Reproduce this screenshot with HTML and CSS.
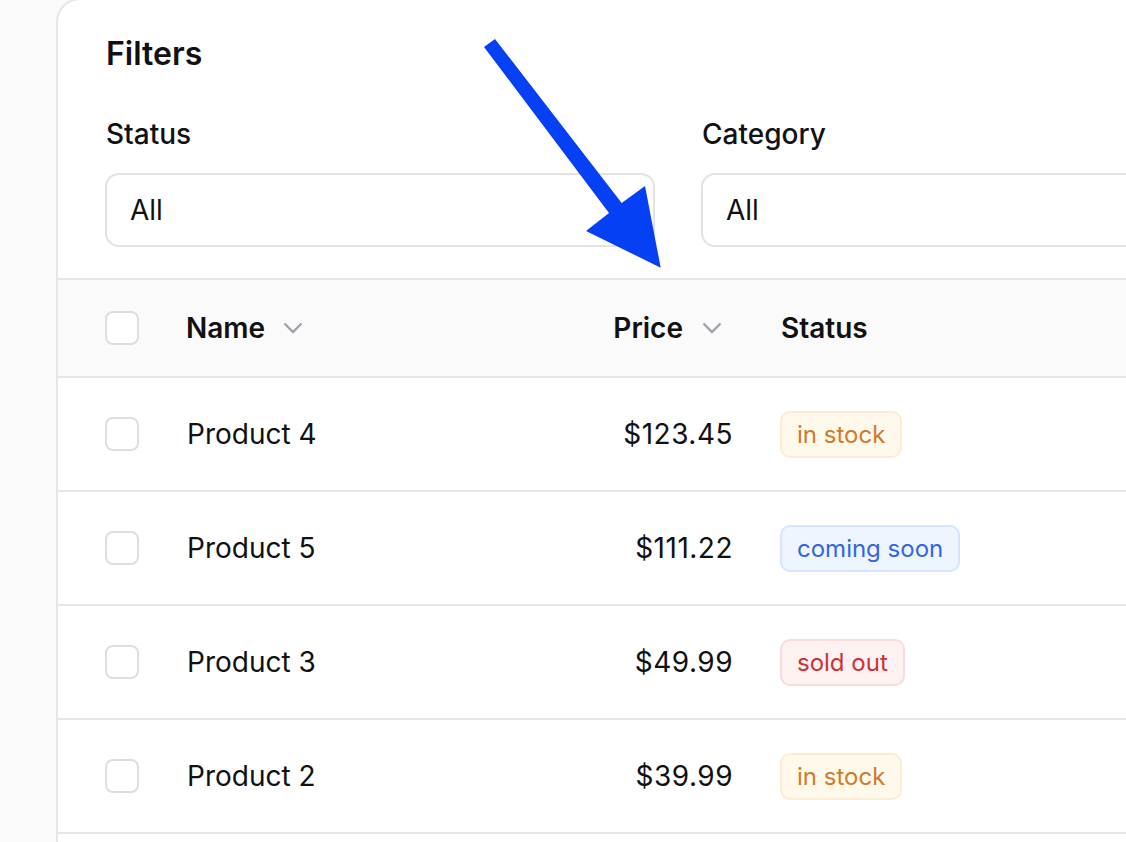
FILE: index.html
```html
<!DOCTYPE html>
<html lang="en">
<head>
<meta charset="utf-8">
<title>Products</title>
<link rel="stylesheet" href="styles.css">
</head>
<body>
<div class="page">
  <section class="card">
    <div class="filters">
      <h2 class="filters-title">Filters</h2>
      <div class="filter-grid">
        <div class="field">
          <label class="field-label">Status</label>
          <div class="select">All</div>
        </div>
        <div class="field">
          <label class="field-label">Category</label>
          <div class="select">All</div>
        </div>
      </div>
    </div>
    <div class="table">
      <div class="row head">
        <span class="checkbox"></span>
        <div class="th th-name">Name
          <svg class="chev" width="20" height="12" viewBox="0 0 20 12"><polyline points="1.5,1.5 10,10 18.5,1.5" fill="none" stroke="#a1a1aa" stroke-width="2.4"/></svg>
        </div>
        <div class="th th-price">Price
          <svg class="chev" width="20" height="12" viewBox="0 0 20 12"><polyline points="1.5,1.5 10,10 18.5,1.5" fill="none" stroke="#a1a1aa" stroke-width="2.4"/></svg>
        </div>
        <div class="th">Status</div>
      </div>
      <div class="row">
        <span class="checkbox"></span>
        <div class="td">Product 4</div>
        <div class="td price">$123.45</div>
        <div class="td"><span class="badge amber">in stock</span></div>
      </div>
      <div class="row">
        <span class="checkbox"></span>
        <div class="td">Product 5</div>
        <div class="td price">$111.22</div>
        <div class="td"><span class="badge blue">coming soon</span></div>
      </div>
      <div class="row">
        <span class="checkbox"></span>
        <div class="td">Product 3</div>
        <div class="td price">$49.99</div>
        <div class="td"><span class="badge red">sold out</span></div>
      </div>
      <div class="row">
        <span class="checkbox"></span>
        <div class="td">Product 2</div>
        <div class="td price">$39.99</div>
        <div class="td"><span class="badge amber">in stock</span></div>
      </div>
    </div>
  </section>
  <svg class="arrow" width="1126" height="842" viewBox="0 0 1126 842">
    <polygon points="484,47 495,39 621.7,203 645,186 660.7,267.7 586,231 609,213" fill="#0540f5"/>
  </svg>
</div>
</body>
</html>
```
FILE: styles.css
```css
* { box-sizing: border-box; }
html, body {
  margin: 0;
  padding: 0;
  background: #fafafa;
  overflow: hidden;
  height: 842px;
}
body {
  font-family: Inter, "Noto Sans", "Liberation Sans", sans-serif;
  color: #111113;
}
.page {
  position: relative;
  width: 1126px;
  height: 842px;
  overflow: hidden;
}
.card {
  margin-left: 56px;
  margin-top: -2px;
  width: 1300px;
  min-height: 900px;
  background: #fff;
  border: 2px solid #e6e6e6;
  border-right: none;
  border-bottom: none;
  border-radius: 24px 0 0 0;
}
.filters {
  padding: 38px 47px 31px 47px;
}
.filters-title {
  margin: 0;
  font-size: 32px;
  line-height: 31px;
  font-weight: 600;
  padding-left: 1px;
}
.filter-grid {
  margin-top: 51px;
  display: grid;
  grid-template-columns: 550px 550px;
  column-gap: 46px;
}
.field {
  display: flex;
  flex-direction: column;
  gap: 25px;
}
.field-label {
  font-size: 28px;
  line-height: 28px;
  font-weight: 500;
  padding-left: 1px;
}
.select {
  height: 74px;
  border: 2px solid #e3e3e3;
  border-radius: 14px;
  padding: 0 24px 0 23px;
  display: flex;
  align-items: center;
  font-size: 28px;
}
.row {
  display: grid;
  grid-template-columns: 34px 290px 208px 1fr;
  column-gap: 48px;
  align-items: center;
  padding-left: 47px;
  height: 114px;
  border-bottom: 2px solid #e6e6e6;
  font-size: 28px;
}
.row.head {
  height: 100px;
  border-top: 2px solid #e6e6e6;
  background: #fafafa;
}
.checkbox {
  width: 34px;
  height: 34px;
  border: 2px solid #dedede;
  border-radius: 8px;
  background: #fff;
}
.th {
  font-weight: 600;
  display: flex;
  align-items: center;
  gap: 19px;
}
.th-name { gap: 18px; margin-left: -1px; }
.th-price {
  justify-content: flex-end;
  padding-right: 11px;
}
.chev { display: block; }
.price { text-align: right; letter-spacing: 0.5px; }
.badge {
  display: inline-block;
  height: 47px;
  line-height: 43px;
  padding: 0 15px 0 15px;
  margin-left: -1px;
  border: 2px solid;
  border-radius: 10px;
  font-size: 24px;
}
.amber { background: #fff9eb; border-color: #fcecd2; color: #cf7a2c; }
.blue { background: #eef5ff; border-color: #d7e5fc; color: #3366e3; }
.red { background: #fdf1f1; border-color: #f8dcdc; color: #cc3333; }
.arrow {
  position: absolute;
  left: 0;
  top: 0;
  pointer-events: none;
}
```
